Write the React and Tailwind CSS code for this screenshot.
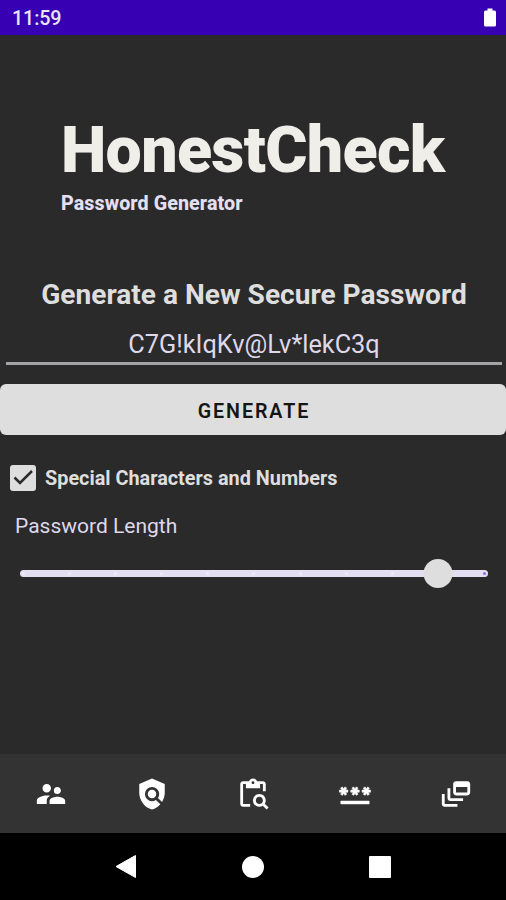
import React, { useState } from 'react'
import { MdSupervisorAccount, MdPolicy, MdContentPasteSearch, MdPassword, MdOutlineDynamicFeed } from 'react-icons/md'

const tabs = [
  { id: 'accounts', Icon: MdSupervisorAccount },
  { id: 'policy', Icon: MdPolicy },
  { id: 'check', Icon: MdContentPasteSearch },
  { id: 'password', Icon: MdPassword, bold: true },
  { id: 'feed', Icon: MdOutlineDynamicFeed },
]

const STEPS = 10

function StatusBar() {
  return (
    <div className="h-[35px] shrink-0 bg-[#3700b3] flex items-center justify-between pl-3 pr-[9px]">
      <span className="pt-[2px] text-[19.7px] leading-[35px] font-medium tracking-[-0.1px] text-[#ebe5fa]">11:59</span>
      <svg width="14" height="20" viewBox="0 0 14 20" fill="#fff">
        <path d="M4.5 0.5h5v2h2a1.5 1.5 0 0 1 1.5 1.5v13a1.5 1.5 0 0 1-1.5 1.5h-9A1.5 1.5 0 0 1 1 17v-13A1.5 1.5 0 0 1 2.5 2.5h2z" />
      </svg>
    </div>
  )
}

function LengthSlider({ value }) {
  const percent = (value / STEPS) * 100
  return (
    <div className="mx-5 mt-[19px] w-[468px] h-[29px] relative flex items-center">
      <div className="w-full h-[7px] rounded-full bg-[#e4def3] flex items-center justify-between px-[2px]">
        {Array.from({ length: STEPS + 1 }, (_, i) => (
          <span
            key={i}
            className={`w-[3px] h-[3px] rounded-full ${i > value ? 'bg-[#8f6cf0]' : 'bg-[#eeebf5]'}`}
          />
        ))}
      </div>
      {/* Thumb */}
      <div className="absolute inset-y-0 left-[2px] right-[4px]">
        <div
          className="absolute top-0 w-[29px] h-[29px] -translate-x-1/2 rounded-full bg-[#dedede]"
          style={{ left: `${percent}%` }}
        />
      </div>
    </div>
  )
}

export default function App() {
  const [special, setSpecial] = useState(true)

  return (
    <div className="w-[506px] h-[900px] flex flex-col overflow-hidden bg-[#2a2a2a] font-['Roboto',sans-serif]">
      <StatusBar />

      <main className="flex-1 flex flex-col">
        {/* Title */}
        <header className="pl-[61px] pt-[77px]">
          <h1 className="text-[64.5px] leading-[76px] font-black tracking-[-0.7px] text-[#f0eee8] whitespace-nowrap">HonestCheck</h1>
          <p className="mt-[4px] text-[19.7px] leading-[24px] font-extrabold tracking-[0.08px] text-[#e4dff0]">Password Generator</p>
        </header>

        <h2 className="mt-[61px] pl-[2px] text-center text-[28.1px] leading-[36px] font-bold text-[#dedede] whitespace-nowrap">
          Generate a New Secure Password
        </h2>

        <div className="ml-[6px] mr-[4px] mt-[11px] h-[41px] border-b-[3px] border-[#a4a4a6] text-center text-[25.3px] leading-[42px] text-[#ded8ea]">
          C7G!kIqKv@Lv*lekC3q
        </div>

        <button className="mt-[19px] h-[51px] shrink-0 rounded-[6px] bg-[#dedede] pt-[4px] pl-[2px] text-[19.7px] font-semibold tracking-[1.9px] text-[#151515]">
          GENERATE
        </button>

        <label className="mt-[29px] ml-[10px] h-[27px] flex items-center gap-[9px]">
          <input type="checkbox" className="sr-only" checked={special} onChange={() => setSpecial(!special)} />
          <span className="w-[26px] h-[26px] rounded-[3px] bg-[#dedede]">
            {special && (
              <svg width="26" height="26" viewBox="0 0 26 26" fill="none" stroke="#2a2a2a" strokeWidth="2.5">
                <path d="M4.5 12.5l5.5 5.5L22 6" />
              </svg>
            )}
          </span>
          <span className="pt-[2px] text-[19.85px] leading-[27px] font-bold text-[#dedede]">Special Characters and Numbers</span>
        </label>

        <p className="mt-[21px] ml-[15px] text-[21px] leading-[28px] text-[#ded8ea]">Password Length</p>

        <LengthSlider value={9} />
      </main>

      {/* Bottom tabs */}
      <nav className="h-[79px] shrink-0 bg-[#333333] grid grid-cols-5 -mr-px">
        {tabs.map(({ id, Icon, bold }) => (
          <button key={id} className="flex items-center justify-center text-white">
            <Icon size={34} className={bold ? '[stroke-width:0.4px] [&>path[fill=none]]:stroke-none' : ''} />
          </button>
        ))}
      </nav>

      {/* System navigation */}
      <div className="h-[67px] shrink-0 bg-black flex items-center justify-center gap-[105px]">
        <svg width="22" height="25" viewBox="0 0 22 25" fill="#fff" stroke="#fff" strokeLinejoin="round">
          <path d="M1 12.5L20.5 1.5v22z" />
        </svg>
        <span className="w-[22px] h-[22px] rounded-full bg-white" />
        <span className="w-[22px] h-[22px] rounded-[1px] bg-white" />
      </div>
    </div>
  )
}
